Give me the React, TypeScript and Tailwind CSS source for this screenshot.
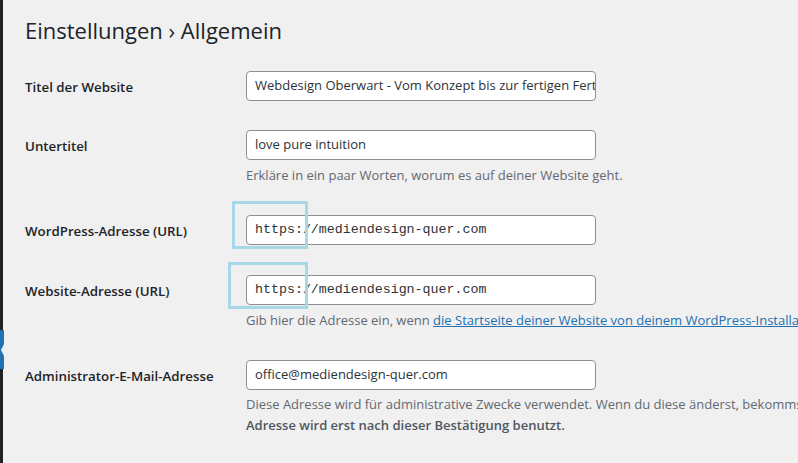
import React from "react";

const sans = "font-['Open_Sans','Liberation_Sans',sans-serif]";
const mono = "font-['Liberation_Mono','DejaVu_Sans_Mono',monospace]";

function Label({ children }: { children: React.ReactNode }) {
  return (
    <div className="w-[221px] shrink-0 pt-[6px] text-[13.3px] leading-5 font-semibold text-[#1d2327]">
      {children}
    </div>
  );
}

function Field({ value, code = false }: { value: string; code?: boolean }) {
  return (
    <div
      className={`w-[350px] h-[30px] bg-white border border-[#8c8f94] rounded-[4px] px-2 flex items-center overflow-hidden whitespace-nowrap text-[#2c3338] ${
        code ? `${mono} text-[13.3px]` : "text-[13px]"
      }`}
    >
      {value}
    </div>
  );
}

// light blue marker drawn over the "https://" part
function Marker({ className }: { className: string }) {
  return <div className={`absolute border-[3px] border-[#a6d8e7] pointer-events-none ${className}`} />;
}

export default function App() {
  return (
    <div className={`w-full h-[463px] bg-[#f0f0f1] flex overflow-hidden ${sans}`}>
      {/* admin menu edge */}
      <div className="w-[3px] shrink-0 flex flex-col bg-[#1d2327]">
        <div className="h-[330px]" />
        <div className="relative h-[39px] w-[4px] bg-[#2271b1]">
          <div className="absolute right-0 top-[14px] w-0 h-0 border-y-[6px] border-y-transparent border-r-[3px] border-r-[#f0f0f1]" />
        </div>
      </div>

      <div className="relative flex-1 pl-[22px] whitespace-nowrap">
        <h1 className="pt-[15px] text-[22px] leading-[30px] font-normal text-[#1d2327]">
          Einstellungen › Allgemein
        </h1>

        <div className="mt-[26px] flex">
          <Label>Titel der Website</Label>
          <Field value="Webdesign Oberwart - Vom Konzept bis zur fertigen Fertigstellung" />
        </div>

        <div className="mt-[29px] flex">
          <Label>Untertitel</Label>
          <div>
            <Field value="love pure intuition" />
            <p className="mt-[5px] text-[13px] leading-5 text-[#646970]">
              Erkläre in ein paar Worten, worum es auf deiner Website geht.
            </p>
          </div>
        </div>

        <div className="mt-[30px] flex">
          <Label>WordPress-Adresse (URL)</Label>
          <Field value="https://mediendesign-quer.com" code />
        </div>

        <div className="mt-[30px] flex">
          <Label>Website-Adresse (URL)</Label>
          <div>
            <Field value="https://mediendesign-quer.com" code />
            <p className="mt-[5px] text-[13px] leading-5 text-[#646970]">
              Gib hier die Adresse ein, wenn{" "}
              <a className="text-[#2271b1] underline">
                die Startseite deiner Website von deinem WordPress-Installationsverzeichnis abweichen soll
              </a>
              .
            </p>
          </div>
        </div>

        <div className="mt-[30px] flex">
          <Label>Administrator-E-Mail-Adresse</Label>
          <div>
            <Field value="office@mediendesign-quer.com" />
            <p className="mt-[4px] text-[13px] leading-[21px] text-[#646970]">
              Diese Adresse wird für administrative Zwecke verwendet. Wenn du diese änderst, bekommst du eine E-Mail an die neue
              <br />
              <strong className="font-semibold text-[#50575e]">Adresse wird erst nach dieser Bestätigung benutzt.</strong>
            </p>
          </div>
        </div>

        <Marker className="left-[229px] top-[201px] w-[76px] h-[48px]" />
        <Marker className="left-[225px] top-[262px] w-[80px] h-[47px]" />
      </div>
    </div>
  );
}
